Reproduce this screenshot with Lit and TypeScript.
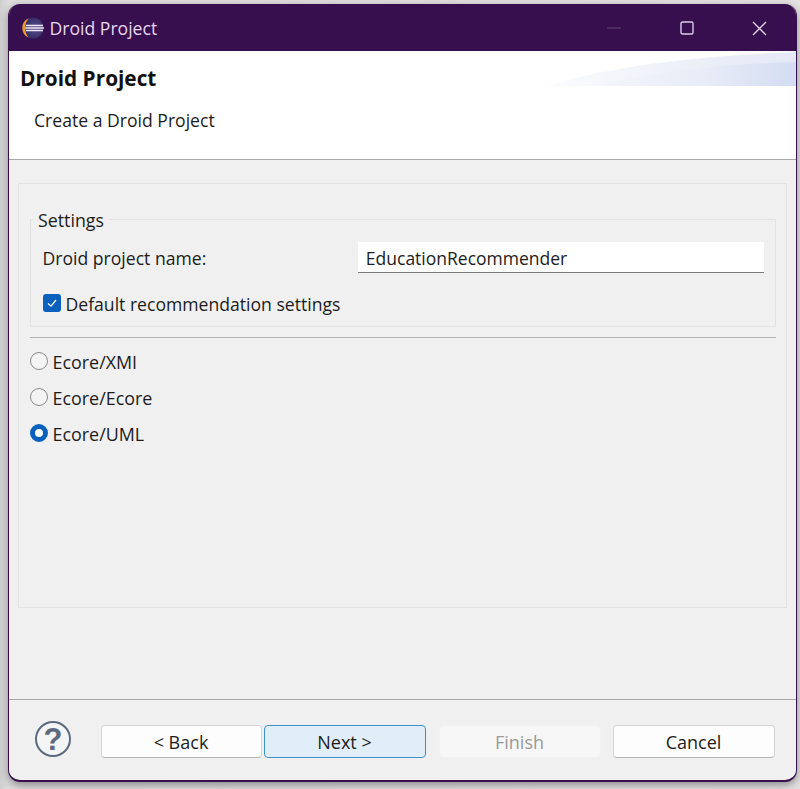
import { LitElement, html, css, svg } from "lit";
import { customElement } from "lit/decorators.js";

@customElement("app-root")
export class AppRoot extends LitElement {
  static styles = css`
    :host { display: block; width: 800px; height: 789px; overflow: hidden; background: linear-gradient(90deg,#cfcfcf 0,#dedcdc 8px,#e3e1e1 100%); font-family: "Open Sans","Noto Sans",sans-serif; font-size: 17.6px; color: #1c1c1c; }
    .page { padding: 4px 3px 0 8px; }
    .win { height: 778px; box-sizing: border-box; border: solid #3a0f4e; border-width: 0 1.5px 2px 1.5px; border-radius: 12px; background: #f0f0f0; display: flex; flex-direction: column; overflow: hidden; box-shadow: 0 3px 8px rgba(0,0,0,.38); }
    .title { height: 47px; box-sizing: border-box; padding: 1px 0 0 10.5px; flex: none; background: #380f4e; color: #e6d6ef; display: flex; align-items: center; font-size: 17.6px; }
    .title .logo { margin-right: 4px; }
    .ctl { margin-left: auto; display: flex; align-items: center; }
    .ctl svg { display: block; }
    .banner { position: relative; height: 109px; box-sizing: border-box; flex: none; background: #fff; border-bottom: 1px solid #a9a7aa; padding-left: 11px; }
    .banner svg { position: absolute; right: 0; top: 0; }
    .banner h1 { margin: 0; padding-top: 14px; font-size: 20.8px; line-height: 26px; font-weight: 700; color: #111; position: relative; }
    .banner p { margin: 0; padding: 17px 0 0 14px; line-height: 24px; position: relative; }
    .main { flex: 1; padding: 23px 9px 0 8.5px; }
    .panel { height: 425px; box-sizing: border-box; border: 1px solid #e2e2e2; padding: 35px 10px 0 11px; }
    .group { position: relative; height: 108px; box-sizing: border-box; border: 1px solid #e2e2e2; padding: 21px 11px 0 12px; }
    .legend { position: absolute; left: 2.5px; top: -10px; background: #f0f0f0; padding: 0 5px; line-height: 20px; font-size: 17.8px; }
    .row { display: flex; align-items: center; height: 32px; }
    .row .lab { width: 316px; padding-top: 1px; }
    .input { width: 407px; height: 31px; box-sizing: border-box; background: #fff; border-bottom: 1px solid #7a7a7a; padding-left: 8px; line-height: 32px; white-space: nowrap; font-size: 17.5px; }
    .check { display: flex; align-items: center; margin: 18.5px 0 0 0; height: 24px; gap: 5px; font-size: 17.6px; }
    .box { width: 18px; height: 18px; border-radius: 3px; background: #0a60bd; display: flex; align-items: center; justify-content: center; margin-top: -1px; }
    hr { border: 0; height: 1px; background: #b3b1b3; margin: 10px 0 0 0; }
    .radios { display: flex; flex-direction: column; gap: 12px; margin-top: 11px; font-size: 17.9px; }
    .radio { display: flex; align-items: center; gap: 5px; height: 24px; }
    .radio .txt { padding-top: 1px; }
    .dot { width: 18px; height: 18px; box-sizing: border-box; border-radius: 50%; border: 1.5px solid #8a8a8a; background: #f4f4f4; }
    .dot.on { border: 5px solid #0a60bd; background: #fff; }
    .foot { height: 81px; flex: none; border-top: 1px solid #a9a7aa; display: flex; align-items: flex-start; padding: 25px 0 0 25px; box-sizing: border-box; font-size: 18px; }
    .help { margin-top: -5px; margin-right: 28.5px; }
    .btn { width: 162px; height: 33px; box-sizing: border-box; padding-top: 1px; background: #fdfdfd; border: 1px solid #d4d4d4; border-bottom-color: #b5b5b5; border-radius: 4px; display: flex; align-items: center; justify-content: center; margin-right: 2px; }
    .btn.back { width: 161px; }
    .btn.next { background: #e0eef9; border-color: #3d8fc9; margin-right: 13px; }
    .btn.off { background: #f7f7f7; border-color: #f2f2f2; color: #9a9a9a; margin-right: 12px; }
  `;

  render() {
    return html`<div class="page"><div class="win">
      <div class="title">
        <svg class="logo" width="26" height="24" viewBox="0 0 26 24">
          <defs><radialGradient id="g" cx=".6" cy=".5" r=".6"><stop offset="0" stop-color="#5b4f8f"/><stop offset="1" stop-color="#2e2760"/></radialGradient></defs>
          <circle cx="13" cy="12" r="10.5" fill="url(#g)"/>
          <path d="M9 2.2A10.5 10.5 0 0 0 9 21.8A12 12 0 0 1 5.5 12A12 12 0 0 1 9 2.2Z" fill="#e89a2c"/>
          <path d="M6 9.4H23M5.4 12H24M6 14.6H23" stroke="#efe9f6" stroke-width="1.5"/>
        </svg>
        <span>Droid Project</span>
        <div class="ctl">
          <svg width="14" height="20" viewBox="0 0 14 20"><path d="M0 10H14" stroke="#5f4a70" stroke-width="1"/></svg>
          <svg style="margin-left:59px" width="14" height="14" viewBox="0 0 14 14"><rect x="1" y="1" width="12" height="12" rx="1.5" fill="none" stroke="#dccbe6" stroke-width="1.4"/></svg>
          <svg style="margin:0 29px 0 58px" width="15" height="15" viewBox="0 0 15 15"><path d="M1 1L14 14M14 1L1 14" stroke="#e6d6ef" stroke-width="1.3"/></svg>
        </div>
      </div>
      <div class="banner">
        ${svg`<svg width="250" height="36" viewBox="0 0 250 36">
          <defs>
            <linearGradient id="b" x1="0" x2="1"><stop offset="0" stop-color="#fbfcfe"/><stop offset=".5" stop-color="#eef1f9"/><stop offset="1" stop-color="#e4e9f6"/></linearGradient>
            <linearGradient id="c" x1="0" x2="1"><stop offset="0" stop-color="#f4f6fb"/><stop offset=".55" stop-color="#e8ecf7"/><stop offset="1" stop-color="#d3dcf1"/></linearGradient>
          </defs>
          <path d="M0 35C60 17 140 5 250 1V35Z" fill="url(#b)"/>
          <path d="M50 35C110 20 180 13 250 11V35Z" fill="url(#c)"/>
        </svg>`}
        <h1>Droid Project</h1>
        <p>Create a Droid Project</p>
      </div>
      <div class="main">
        <div class="panel">
          <div class="group">
            <span class="legend">Settings</span>
            <div class="row"><span class="lab">Droid project name:</span><div class="input">EducationRecommender</div></div>
            <div class="check">
              <span class="box"><svg width="12" height="12" viewBox="0 0 12 12"><path d="M2 6.5L5 9.2L10 3" fill="none" stroke="#fff" stroke-width="1.2"/></svg></span>
              <span>Default recommendation settings</span>
            </div>
          </div>
          <hr />
          <div class="radios">
            <div class="radio"><span class="dot"></span><span class="txt">Ecore/XMI</span></div>
            <div class="radio"><span class="dot"></span><span class="txt">Ecore/Ecore</span></div>
            <div class="radio"><span class="dot on"></span><span class="txt">Ecore/UML</span></div>
          </div>
        </div>
      </div>
      <div class="foot">
        <svg class="help" width="38" height="38" viewBox="0 0 38 38">
          <circle cx="19" cy="19" r="17" fill="#f4f5f7" stroke="#5c6a80" stroke-width="2"/>
          <text x="19" y="30" text-anchor="middle" font-family="Liberation Sans" font-weight="700" font-size="31" fill="#5c6a80">?</text>
        </svg>
        <div class="btn back">&lt; Back</div>
        <div class="btn next">Next &gt;</div>
        <div class="btn off">Finish</div>
        <div class="btn">Cancel</div>
      </div>
    </div></div>`;
  }
}
